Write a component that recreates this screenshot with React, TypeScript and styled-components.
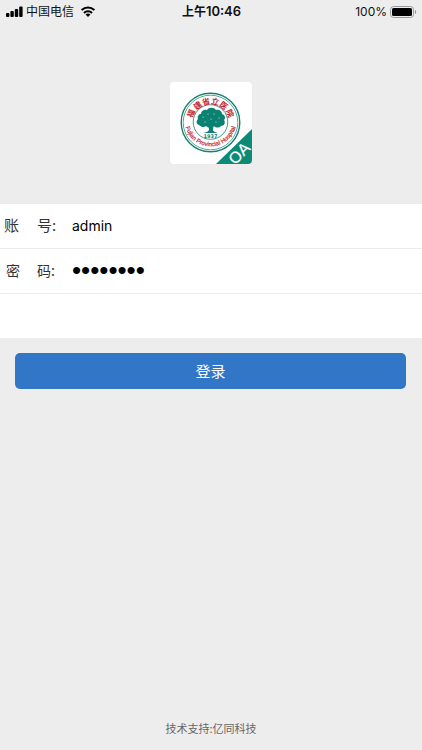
import React, { useState } from 'react';
import styled, { createGlobalStyle } from 'styled-components';

const GlobalStyle = createGlobalStyle`
  * { box-sizing: border-box; }
  body {
    margin: 0;
    background: #ededed;
    color: #111;
    font-family: Inter, "Noto Sans CJK SC", sans-serif;
  }
`;

const Page = styled.div`
  display: flex;
  flex-direction: column;
  min-height: 100vh;
`;

const StatusBar = styled.header`
  display: grid;
  grid-template-columns: 1fr auto 1fr;
  align-items: center;
  height: 22px;
  padding: 0 5px 0 6px;
  font-size: 12px;
  line-height: 22px;
`;

const StatusGroup = styled.div<{ $end?: boolean }>`
  display: flex;
  align-items: center;
  justify-content: ${(p) => (p.$end ? 'flex-end' : 'flex-start')};
  gap: 3px;
`;

const Carrier = styled.span`
  margin-right: 4px;
`;

const Clock = styled.time`
  font-weight: 600;
`;

const ClockDigits = styled.span`
  font-size: 13px;
`;

const Brand = styled.div`
  display: flex;
  justify-content: center;
  padding: 60px 0 40px;
`;

const Logo = styled.svg`
  display: block;
  width: 82px;
  height: 82px;
  overflow: visible;
`;

const Fields = styled.div`
  height: 134px;
  background: #fff;
`;

const Field = styled.div`
  display: flex;
  align-items: center;
  height: 45px;
  border-bottom: 1px solid #ececec;
`;

const Label = styled.label<{ $small?: boolean }>`
  display: flex;
  flex: none;
  gap: ${(p) => (p.$small ? 17 : 18)}px;
  width: 72px;
  padding-left: ${(p) => (p.$small ? 6 : 4)}px;
  padding-bottom: 2px;
  font-family: "Noto Sans CJK SC", sans-serif;
  font-size: ${(p) => (p.$small ? 14 : 15)}px;
  line-height: 24px;
  color: #333;
`;

const Input = styled.input`
  flex: 1;
  min-width: 0;
  height: 44px;
  padding: 0 0 2px;
  border: 0;
  outline: 0;
  background: transparent;
  color: #000;
  font-family: Inter, "Noto Sans CJK SC", sans-serif;
  font-size: 14px;

  &[type='password'] {
    font-family: "Liberation Sans", sans-serif;
    font-size: 26px;
  }
`;

const LoginButton = styled.button`
  display: block;
  width: 100%;
  height: 36px;
  padding: 2px 0 0;
  border: 0;
  border-radius: 5px;
  background: #3277c7;
  color: #fff;
  font-family: Inter, "Noto Sans CJK SC", sans-serif;
  font-size: 15px;
  line-height: 34px;
`;

const Actions = styled.div`
  padding: 15px 16px 0 15px;
`;

const Footer = styled.footer`
  margin-top: auto;
  padding-bottom: 12px;
  text-align: center;
  font-family: "Noto Sans CJK SC", sans-serif;
  font-size: 11px;
  line-height: 20px;
  color: #666;
`;

const SignalIcon = () => (
  <svg width="17" height="11" viewBox="0 0 17 11" aria-hidden="true">
    <rect x="0" y="7" width="3.4" height="4" rx="1" />
    <rect x="4.4" y="5" width="3.4" height="6" rx="1" />
    <rect x="8.8" y="3" width="3.4" height="8" rx="1" />
    <rect x="13.2" y="0.5" width="3.4" height="10.5" rx="1" />
  </svg>
);

const WifiIcon = () => (
  <svg width="14" height="11" viewBox="0 0 14 11" aria-hidden="true">
    <g fill="none" stroke="#000" strokeWidth="2.1">
      <path d="M0.7 4.1a9 9 0 0 1 12.6 0" />
      <path d="M3 6.9a5.7 5.7 0 0 1 8 0" />
    </g>
    <path d="M4.6 8.6a3.2 3.2 0 0 1 4.8 0L7 10.9z" />
  </svg>
);

const BatteryIcon = () => (
  <svg width="27" height="12" viewBox="0 0 27 12" aria-hidden="true">
    <rect x="0.5" y="0.5" width="23" height="11" rx="3" fill="none" stroke="#999" />
    <rect x="2" y="2" width="20" height="8" rx="1.5" />
    <path d="M25 4v4c1.6-.7 1.6-3.3 0-4z" fill="#888" />
  </svg>
);

const emblemCharacters = [
  { character: '福', angle: -65 },
  { character: '建', angle: -37 },
  { character: '省', angle: -12 },
  { character: '立', angle: 13 },
  { character: '医', angle: 38 },
  { character: '院', angle: 65 },
];

const HospitalLogo = () => (
  <Logo viewBox="0 0 82 82" role="img" aria-label="福建省立医院 OA">
    <defs>
      <clipPath id="card"><rect width="82" height="82" rx="4" /></clipPath>
      <path id="arcBottom" d="M14.7 38.5a25.8 25.8 0 1 0 51.6 0" />
    </defs>
    <g clipPath="url(#card)">
      <rect width="82" height="82" fill="#fff" />
      <path d="M82 47V82H46z" fill="#0b8a78" />
    </g>
    <circle cx="40.5" cy="40.5" r="29.3" fill="#fff" stroke="#17806f" strokeWidth="1.4" />
    <circle cx="40.5" cy="40.5" r="27.3" fill="none" stroke="#17806f" strokeWidth="0.7" />
    <circle cx="40.5" cy="40" r="17.3" fill="none" stroke="#17806f" strokeWidth="0.8" />
    <g fill="#0b8271">
      <path d="M29 43c-3-1-3-4-1-6-1-3 1-5 3-5 0-3 3-5 6-4 2-3 7-3 9 0 3-1 6 1 6 4 3 1 4 4 2 6 2 3 0 6-3 6-2 2-5 2-7 0-2 2-6 2-8 0-2 2-5 1-7-1z" />
      <path d="M36 41c2 2 3 4 3 7-1 2-3 2-6 3h15c-3-1-5-1-5-4 0-2 1-4 3-6l-4 2-1-3-2 3z" />
    </g>
    <g fill="#fff">
      <circle cx="33" cy="35" r="0.5" /><circle cx="38" cy="32" r="0.5" />
      <circle cx="44" cy="32" r="0.5" /><circle cx="49" cy="36" r="0.5" />
      <circle cx="41" cy="37" r="0.5" /><circle cx="35" cy="40" r="0.5" />
      <circle cx="46" cy="40" r="0.5" />
    </g>
    <text x="40.5" y="55.5" textAnchor="middle" fontFamily="DejaVu Sans, sans-serif" fontWeight="700" fontSize="5" fill="#17806f">1937</text>
    <g fontFamily="Noto Sans CJK SC, sans-serif" fontWeight="700" fontSize="8" fill="#c32732" textAnchor="middle">
      {emblemCharacters.map(({ character, angle }) => (
        <text key={character} x="40.5" y="22" transform={`rotate(${angle} 40.5 40.5)`}>{character}</text>
      ))}
    </g>
    <text fontFamily="Liberation Sans, sans-serif" fontSize="6" fill="#c32732" stroke="#c32732" strokeWidth="0.2">
      <textPath href="#arcBottom" startOffset="50%" textAnchor="middle">Fujian Provincial Hospital</textPath>
    </text>
    <text transform="translate(69 71) rotate(-45)" x="0" y="6" textAnchor="middle" fontFamily="Liberation Sans, sans-serif" fontSize="16" fill="#fff" stroke="#fff" strokeWidth="0.2">OA</text>
  </Logo>
);

export default function App() {
  const [account, setAccount] = useState('admin');
  const [password, setPassword] = useState('password');
  return (
    <Page>
      <GlobalStyle />
      <StatusBar>
        <StatusGroup>
          <SignalIcon />
          <Carrier>中国电信</Carrier>
          <WifiIcon />
        </StatusGroup>
        <Clock>上午<ClockDigits>10:46</ClockDigits></Clock>
        <StatusGroup $end>
          <span>100%</span>
          <BatteryIcon />
        </StatusGroup>
      </StatusBar>
      <Brand><HospitalLogo /></Brand>
      <form onSubmit={(e) => e.preventDefault()}>
        <Fields>
          <Field>
            <Label htmlFor="account"><span>账</span><span>号:</span></Label>
            <Input id="account" type="text" value={account} onChange={(e) => setAccount(e.target.value)} />
          </Field>
          <Field>
            <Label htmlFor="password" $small><span>密</span><span>码:</span></Label>
            <Input id="password" type="password" value={password} onChange={(e) => setPassword(e.target.value)} />
          </Field>
        </Fields>
        <Actions>
          <LoginButton type="submit">登录</LoginButton>
        </Actions>
      </form>
      <Footer>技术支持:亿同科技</Footer>
    </Page>
  );
}
